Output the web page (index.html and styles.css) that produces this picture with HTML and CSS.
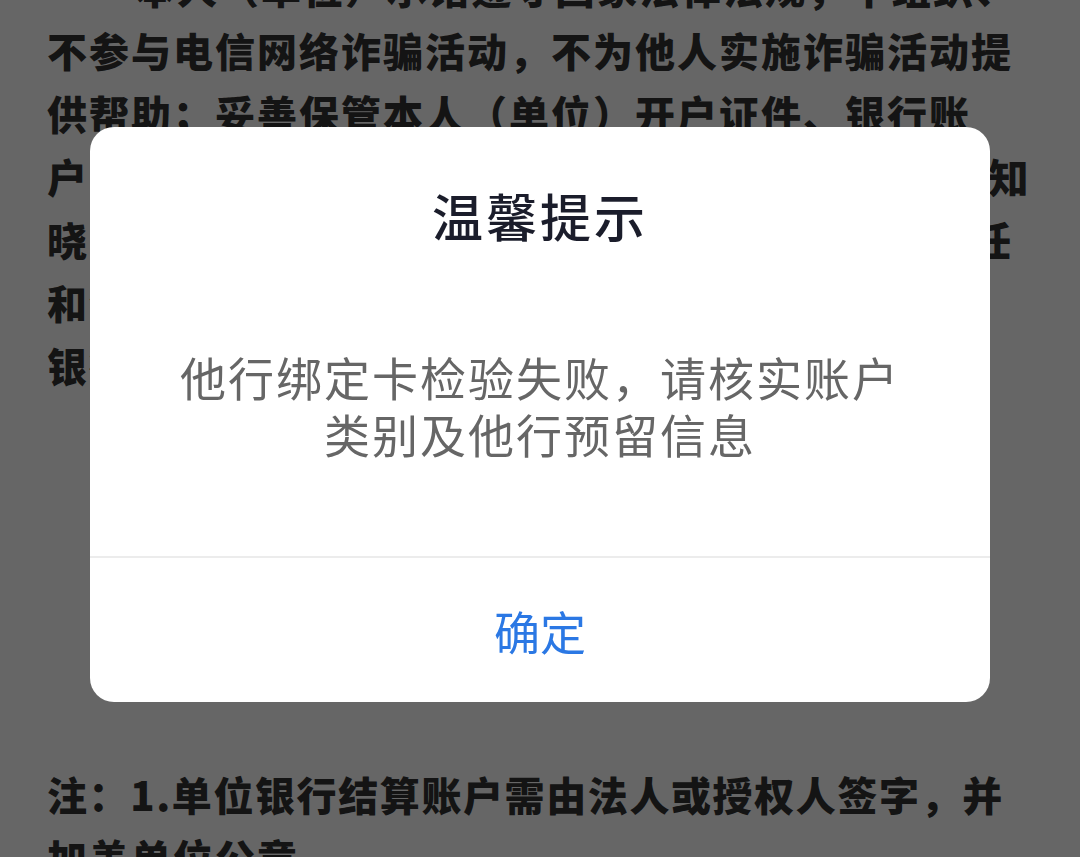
FILE: index.html
```html
<!DOCTYPE html>
<html lang="zh-CN">
<head>
<meta charset="utf-8">
<title>温馨提示</title>
<link rel="stylesheet" href="styles.css">
</head>
<body>
<main class="page">
  <div class="para">
    <span class="line indent">本人（单位）承诺遵守国家法律法规，不组织、</span>
    <span class="line">不参与电信网络诈骗活动，不为他人实施诈骗活动提</span>
    <span class="line">供帮助；妥善保管本人（单位）开户证件、银行账</span>
    <span class="line wide">户、支付账户及银行卡等，不出租、出借、出售，知</span>
    <span class="line">晓出租出借账户的法律后果，自愿承担相应法律责任</span>
    <span class="line">和信用惩戒，因违反上述承诺产生的一切后果由本</span>
    <span class="line">银行不承担任何责任。</span>
  </div>
  <div class="para note">
    <span class="line tight">注：1.单位银行结算账户需由法人或授权人签字，并</span>
    <span class="line">加盖单位公章。</span>
  </div>
</main>

<div class="overlay">
  <div class="dialog">
    <div class="dialog-body">
      <h2 class="dialog-title">温馨提示</h2>
      <p class="dialog-msg">他行绑定卡检验失败，请核实账户<br>类别及他行预留信息</p>
    </div>
    <div class="dialog-footer">
      <button class="dialog-btn" type="button">确定</button>
    </div>
  </div>
</div>
</body>
</html>
```

FILE: styles.css
```css
html, body {
  margin: 0;
  padding: 0;
  width: 1080px;
  height: 857px;
  overflow: hidden;
  background: #ffffff;
}

.page {
  margin-top: -44px;
  padding-left: 47px;
  font-family: "Noto Sans CJK SC", "Noto Sans", sans-serif;
  font-weight: 900;
  font-size: 40px;
  letter-spacing: 2px;
  line-height: 63px;
  color: #333333;
}

.para {
  margin: 0;
}

.line {
  display: block;
  white-space: nowrap;
}

.indent {
  padding-left: 88px;
}

.wide {
  letter-spacing: 2.8px;
}

.tight {
  letter-spacing: 1.6px;
}

.note {
  margin-top: 366px;
}

.overlay {
  position: fixed;
  inset: 0;
  background: rgba(0, 0, 0, 0.6);
  display: flex;
  justify-content: center;
  align-items: flex-start;
  padding-top: 127px;
  box-sizing: border-box;
}

.dialog {
  width: 900px;
  background: #ffffff;
  border-radius: 24px;
  overflow: hidden;
  font-family: "Noto Sans CJK SC", "Noto Sans", sans-serif;
  text-align: center;
}

.dialog-body {
  height: 429px;
  box-sizing: border-box;
  padding-top: 53px;
}

.dialog-title {
  margin: 0;
  font-size: 51px;
  font-weight: 500;
  letter-spacing: 3px;
  line-height: 70px;
  color: #1b1d2b;
}

.dialog-msg {
  margin: 98px 0 0;
  font-size: 46px;
  font-weight: 400;
  letter-spacing: 2px;
  line-height: 57px;
  color: #666666;
}

.dialog-footer {
  border-top: 2px solid #ececec;
  height: 146px;
  box-sizing: border-box;
  display: flex;
}

.dialog-btn {
  flex: 1;
  border: 0;
  background: transparent;
  font-family: "Noto Sans CJK SC", "Noto Sans", sans-serif;
  font-size: 46px;
  font-weight: 400;
  color: #2b78e4;
  padding: 0;
  line-height: 1;
}
```
